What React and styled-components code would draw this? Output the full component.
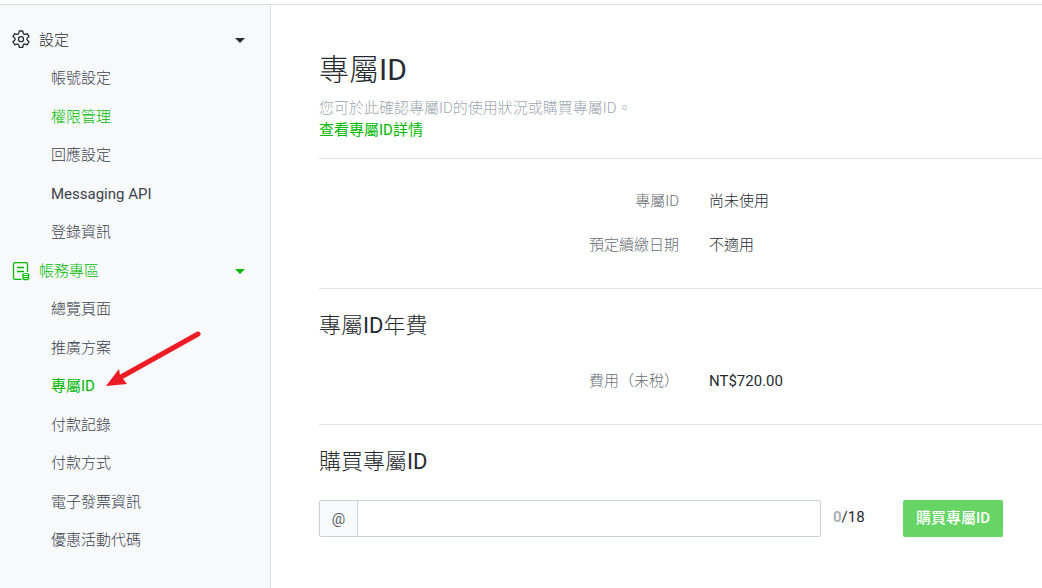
import React, { useState } from "react";
import styled, { createGlobalStyle } from "styled-components";

const SETTINGS = [
  { label: "帳號設定" },
  { label: "權限管理", active: true },
  { label: "回應設定" },
  { label: "Messaging API", latin: true },
  { label: "登錄資訊" },
];

const BILLING = [
  { label: "總覽頁面" },
  { label: "推廣方案" },
  { label: "專屬ID", active: true, pointed: true },
  { label: "付款記錄" },
  { label: "付款方式" },
  { label: "電子發票資訊" },
  { label: "優惠活動代碼" },
];

const MAX_LENGTH = 18;

const GearIcon = () => (
  <svg width="20" height="20" viewBox="0 0 20 20" fill="none" stroke="currentColor" strokeWidth="1.3" strokeLinejoin="round">
    <path d="M8.300 1h3.400l.5 2.200c.2.800 1.100 1.300 1.900 1.100l2.200-.7 1.700 3-1.600 1.500c-.7.600-.7 1.600 0 2.200l1.600 1.500-1.700 3-2.200-.7c-.8-.2-1.700.3-1.900 1.100l-.5 2.200H8.300l-.5-2.200c-.2-.8-1.100-1.300-1.900-1.100l-2.200.7-1.700-3 1.600-1.500c.7-.6.7-1.600 0-2.200L2 6.600l1.700-3 2.200.7c.8.2 1.700-.3 1.900-1.100z" />
    <circle cx="10" cy="9.200" r="2.500" />
  </svg>
);

const BillIcon = () => (
  <svg width="20" height="20" viewBox="0 0 20 20" fill="none" stroke="currentColor" strokeWidth="1.3">
    <path d="M10.500 18.300H4a1.500 1.500 0 0 1-1.500-1.500V3.200A1.500 1.500 0 0 1 4 1.700h11A1.500 1.500 0 0 1 16.500 3.200V11M6 6.500h7M6 10.500h7" />
    <ellipse cx="14.800" cy="13.600" rx="2.900" ry="1.100" strokeWidth="1.100" />
    <path d="M11.900 13.600v3.800c0 .7 1.300 1.200 2.900 1.200s2.900-.5 2.900-1.200v-3.800M11.900 15.500c0 .7 1.300 1.200 2.900 1.200s2.900-.5 2.900-1.200" strokeWidth="1.100" />
  </svg>
);

const MenuGroup = ({ icon, title, items, active }) => {
  const [open, setOpen] = useState(true);

  return (
    <section>
      <GroupButton type="button" $active={active} aria-expanded={open} onClick={() => setOpen(!open)}>
        {icon}
        <span>{title}</span>
        <Caret />
      </GroupButton>
      {open && (
        <MenuList>
          {items.map((item) => (
            <MenuItem key={item.label}>
              <MenuLink href="#" $active={item.active} $regular={item.latin || item.pointed}>
                {item.label}
              </MenuLink>
              {item.pointed && (
                <Arrow width="98" height="60" viewBox="0 0 98 60" aria-hidden="true">
                  <path d="M93 4 16 47" stroke="#ed1c24" strokeWidth="5" strokeLinecap="round" />
                  <path d="M1 56 14 39 15 45 22 54z" fill="#ed1c24" />
                </Arrow>
              )}
            </MenuItem>
          ))}
        </MenuList>
      )}
    </section>
  );
};

const App = () => {
  const [value, setValue] = useState("");

  return (
    <>
      <GlobalStyle />
      <Layout>
        <Sidebar>
          <MenuGroup icon={<GearIcon />} title="設定" items={SETTINGS} />
          <MenuGroup icon={<BillIcon />} title="帳務專區" items={BILLING} active />
        </Sidebar>
        <Main>
          <Title>
            專屬<Latin>ID</Latin>
          </Title>
          <Lead>您可於此確認專屬ID的使用狀況或購買專屬ID。</Lead>
          <DetailLink href="#">查看專屬ID詳情</DetailLink>
          <Divider $top={17} />
          <Details>
            <dt>專屬ID</dt>
            <dd>尚未使用</dd>
            <dt>預定續繳日期</dt>
            <dd>不適用</dd>
          </Details>
          <Divider />
          <SectionTitle>
            專屬<Latin>ID</Latin>年費
          </SectionTitle>
          <Details>
            <dt>費用（未稅）</dt>
            <dd>
              <Latin>NT$720.00</Latin>
            </dd>
          </Details>
          <Divider />
          <SectionTitle>
            購買專屬<Latin>ID</Latin>
          </SectionTitle>
          <PurchaseForm onSubmit={(e) => e.preventDefault()}>
            <InputGroup>
              <Prefix htmlFor="premium-id">@</Prefix>
              <Input
                id="premium-id"
                maxLength={MAX_LENGTH}
                value={value}
                onChange={(e) => setValue(e.target.value)}
              />
            </InputGroup>
            <Counter>
              <b>{value.length}</b>/{MAX_LENGTH}
            </Counter>
            <BuyButton type="submit">購買專屬ID</BuyButton>
          </PurchaseForm>
        </Main>
      </Layout>
    </>
  );
};

const GlobalStyle = createGlobalStyle`
  * {
    box-sizing: border-box;
  }
  body {
    margin: 0;
    color: #262b31;
    background: #fff;
    font: 15px/22px Roboto, "Noto Sans CJK TC", sans-serif;
    font-weight: 300;
  }
  a {
    text-decoration: none;
  }
`;

const Layout = styled.div`
  display: flex;
  min-height: calc(100vh - 4px);
  margin-top: 4px;
  border-top: 1px solid #dcdfe5;
`;

const Sidebar = styled.nav`
  flex: 0 0 271px;
  padding-top: 16px;
  background: #f7f9fb;
  border-right: 1px solid #dcdfe5;
`;

const GroupButton = styled.button`
  display: flex;
  align-items: center;
  gap: 8px;
  width: 100%;
  height: 38px;
  padding: 0 25px 0 11px;
  border: 0;
  background: none;
  color: ${({ $active }) => ($active ? "#00b900" : "#262b31")};
  font: inherit;
  cursor: pointer;
`;

const Caret = styled.i`
  margin-left: auto;
  border: 5px solid transparent;
  border-top-color: currentColor;
  border-bottom: 0;
`;

const MenuList = styled.ul`
  margin: 0;
  padding: 0 0 1px;
  list-style: none;
`;

const MenuItem = styled.li`
  position: relative;
  display: grid;

  &:nth-child(even) {
    padding-top: 1px;
  }
`;

const MenuLink = styled.a`
  padding: 8px 16px 8px 51px;
  color: ${({ $active }) => ($active ? "#00b900" : "#3c434c")};
  font-weight: ${({ $regular }) => ($regular ? 400 : 300)};
`;

const Arrow = styled.svg`
  position: absolute;
  left: 105px;
  bottom: 15px;
  pointer-events: none;
`;

const Main = styled.main`
  flex: 1;
  min-width: 0;
  padding: 44px 0 40px 48px;
`;

const Latin = styled.span`
  font-weight: 400;
`;

const Title = styled.h1`
  margin: 0;
  font-size: 30px;
  font-weight: 300;
  line-height: 42px;
`;

const Lead = styled.p`
  margin: 6px 0 0;
  color: #a0a8b1;
`;

const DetailLink = styled.a`
  color: #00b900;
  font-weight: 400;
`;

const Divider = styled.hr`
  margin: ${({ $top = 0 }) => $top}px 0 0;
  border: 0;
  border-top: 1px solid #e3e3e3;
`;

const Details = styled.dl`
  display: grid;
  grid-template-columns: 360px 1fr;
  gap: 22px 30px;
  margin: 0;
  padding: 31px 0 32px;

  dt {
    color: #6a6f74;
    text-align: right;
  }
  dd {
    margin: 0;
  }
`;

const SectionTitle = styled.h2`
  margin: 24px 0 0;
  font-size: 22px;
  font-weight: 300;
  line-height: 26px;
`;

const PurchaseForm = styled.form`
  display: flex;
  align-items: center;
  margin-top: 25px;
  padding-right: 39px;
`;

const InputGroup = styled.div`
  display: flex;
  flex: 1;
  height: 37px;
  border: 1px solid #cdd1da;
  border-radius: 2px;
`;

const Prefix = styled.label`
  flex: 0 0 38px;
  border-right: 1px solid #cdd1da;
  background: #f7f9fb;
  color: #5a6069;
  font-weight: 400;
  line-height: 36px;
  text-align: center;
`;

const Input = styled.input`
  flex: 1;
  min-width: 0;
  padding: 0 12px;
  border: 0;
  outline: 0;
  font: inherit;
`;

const Counter = styled.span`
  width: 82px;
  padding: 0 0 4px 12px;
  font-weight: 400;

  b {
    color: #a9b1ba;
  }
`;

const BuyButton = styled.button`
  width: 100px;
  height: 37px;
  padding: 0 0 2px;
  border: 0;
  border-radius: 2px;
  background: #66d566;
  color: #fff;
  font: inherit;
  font-weight: 500;
`;

export default App;
